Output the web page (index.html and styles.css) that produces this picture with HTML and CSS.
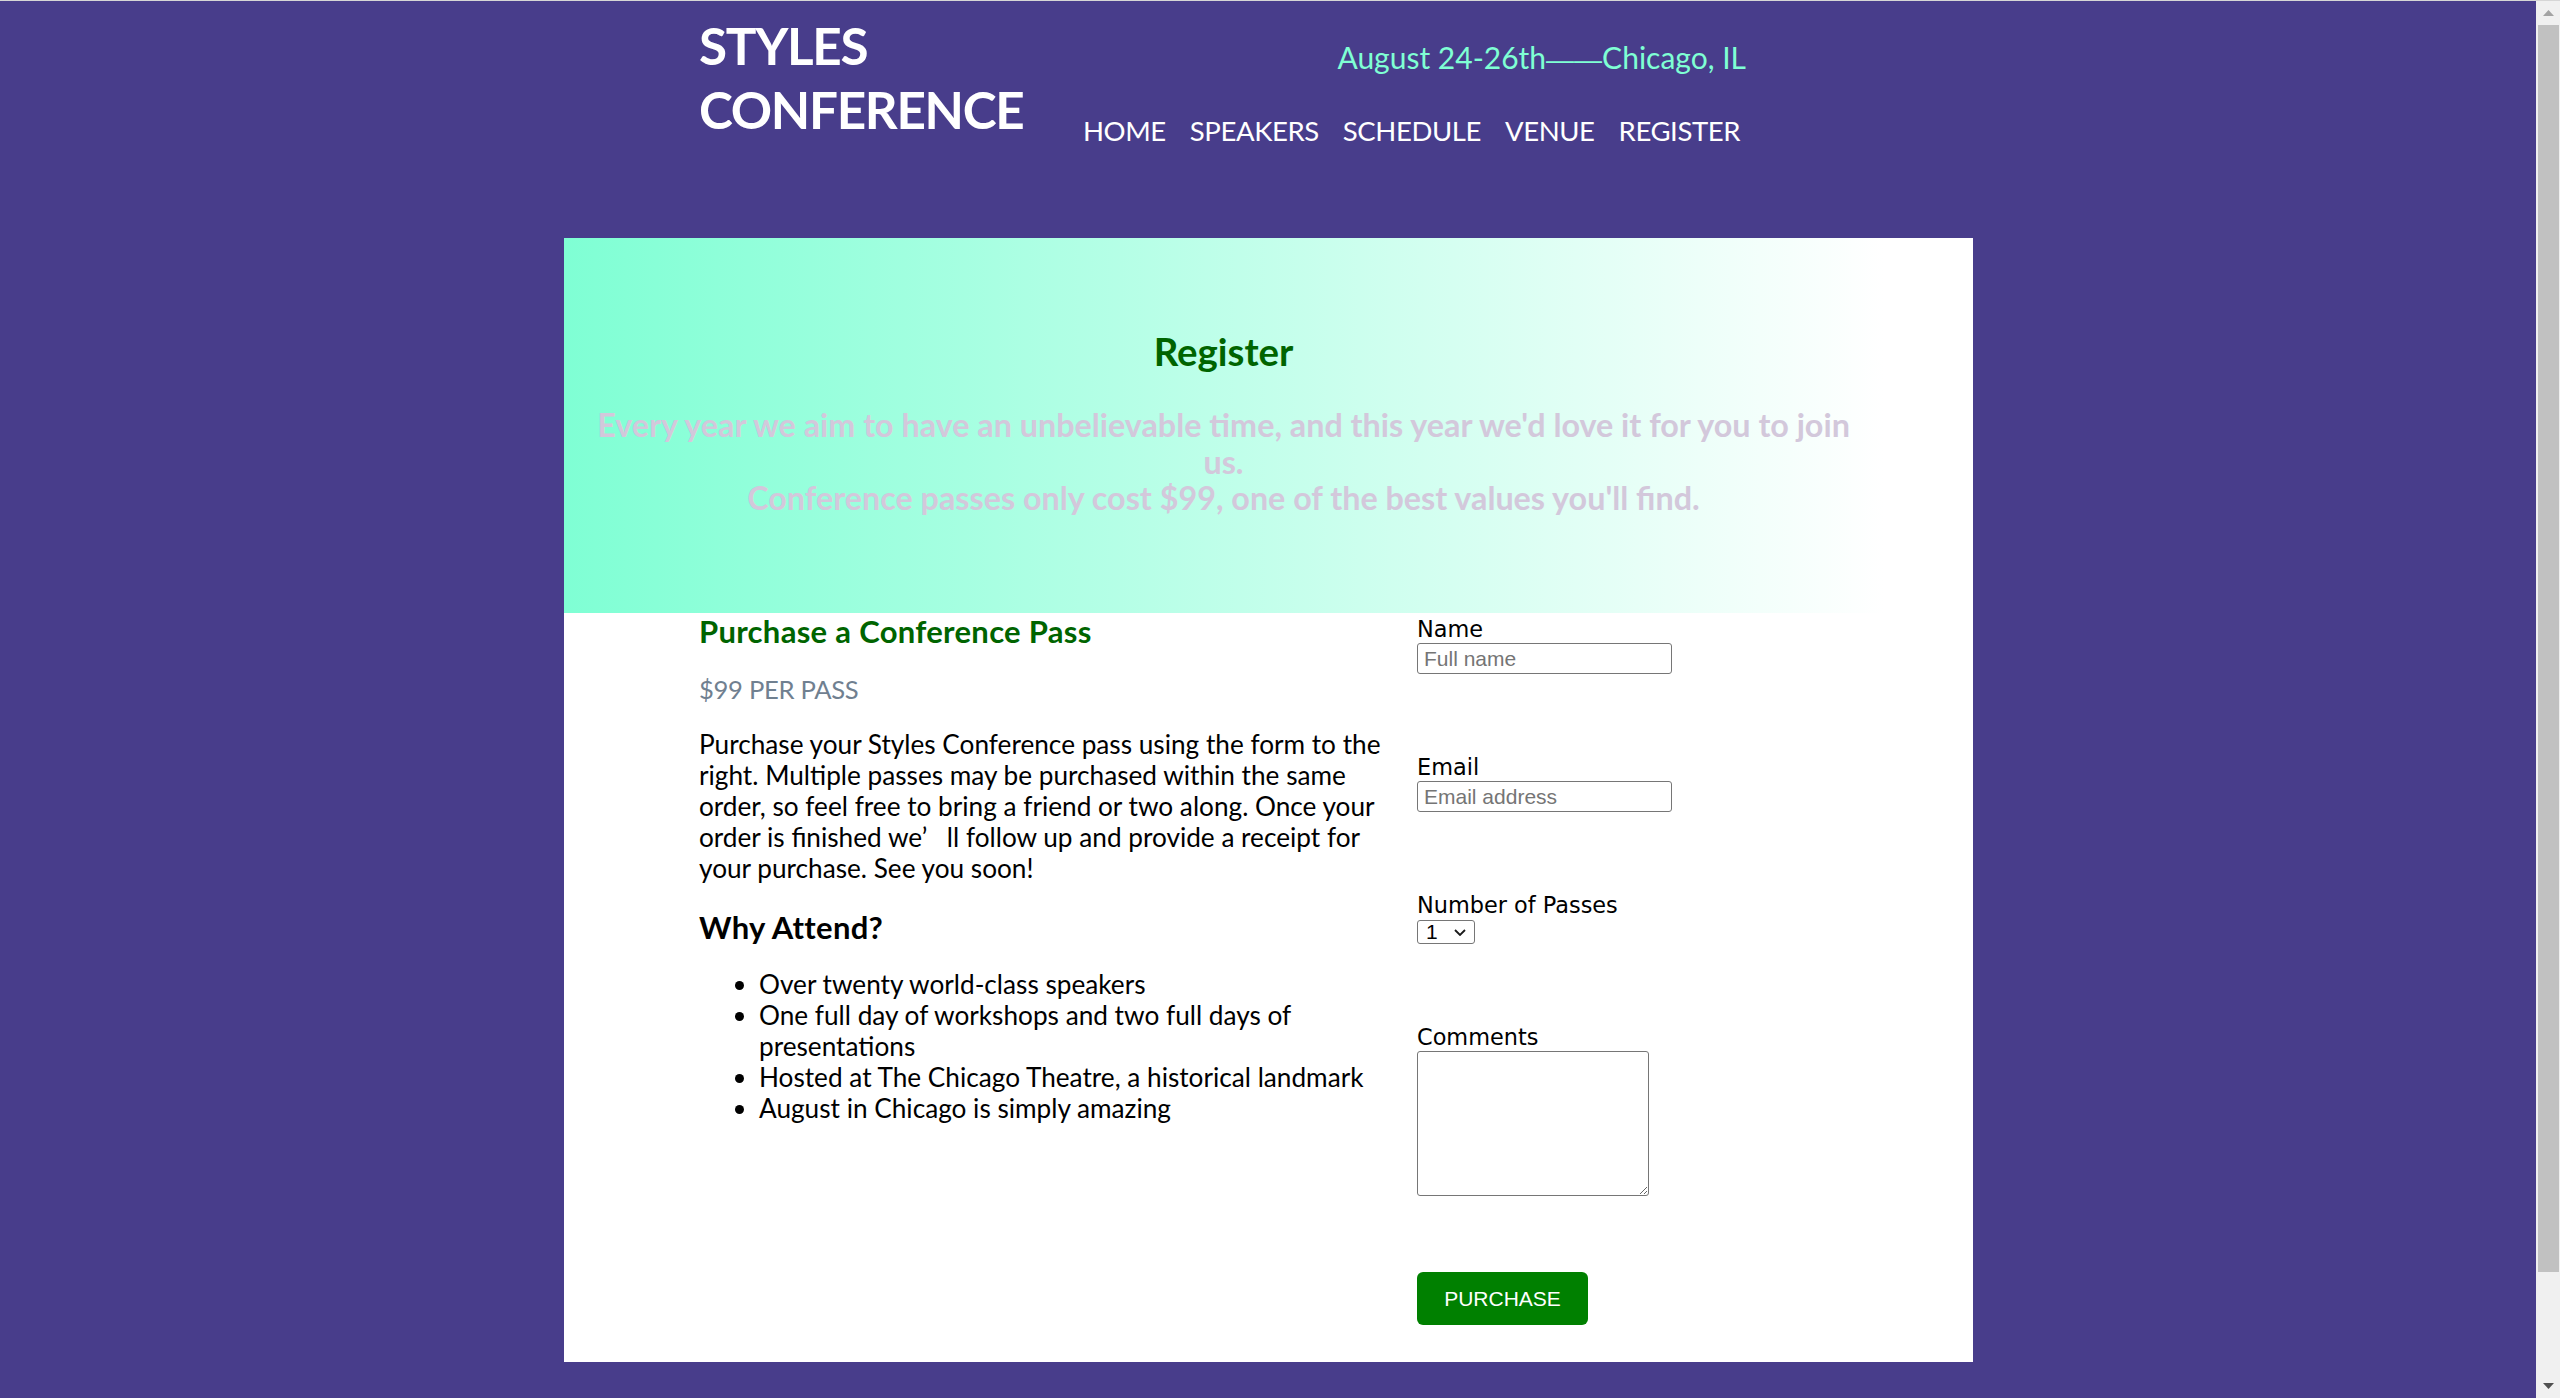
FILE: index.html
```html
<!DOCTYPE html>
<html lang="en">
<head>
<meta charset="utf-8">
<title>Register — Styles Conference</title>
<link rel="stylesheet" href="styles.css">
</head>
<body>
<div class="window">
  <div class="page">
    <header class="site-header">
      <div class="container header-inner">
        <h1 class="logo">STYLES<br>CONFERENCE</h1>
        <div class="header-right">
          <p class="tagline">August 24-26th<span class="dash">——</span>Chicago, IL</p>
          <nav class="nav">
            <a href="#">HOME</a>
            <a href="#">SPEAKERS</a>
            <a href="#">SCHEDULE</a>
            <a href="#">VENUE</a>
            <a href="#">REGISTER</a>
          </nav>
        </div>
      </div>
    </header>

    <main class="card">
      <section class="hero">
        <h2 class="hero-title">Register</h2>
        <p class="hero-text">Every year we aim to have an unbelievable time, and this year we'd love it for you to join us.<br>Conference passes only cost $99, one of the best values you'll find.</p>
      </section>

      <div class="container content">
        <div class="col-left">
          <h3 class="pass-title">Purchase a Conference Pass</h3>
          <p class="price">$99 PER PASS</p>
          <p class="intro">Purchase your Styles Conference pass using the form to the right. Multiple passes may be purchased within the same order, so feel free to bring a friend or two along. Once your order is finished we’&#8195;ll follow up and provide a receipt for your purchase. See you soon!</p>
          <h3 class="why">Why Attend?</h3>
          <ul class="reasons">
            <li>Over twenty world-class speakers</li>
            <li>One full day of workshops and two full days of presentations</li>
            <li>Hosted at The Chicago Theatre, a historical landmark</li>
            <li>August in Chicago is simply amazing</li>
          </ul>
        </div>

        <form class="col-right">
          <div class="field">
            <label for="name">Name</label>
            <input id="name" type="text" placeholder="Full name">
          </div>
          <div class="field">
            <label for="email">Email</label>
            <input id="email" type="email" placeholder="Email address">
          </div>
          <div class="field">
            <label for="qty">Number of Passes</label>
            <div class="select-wrap">
              <select id="qty">
                <option>1</option>
                <option>2</option>
                <option>3</option>
                <option>4</option>
                <option>5</option>
              </select>
              <svg class="chevron" width="12" height="7" viewBox="0 0 12 7"><path d="M1 1 L6 6 L11 1" fill="none" stroke="#1a1a1a" stroke-width="1.8"/></svg>
            </div>
          </div>
          <div class="field field-last">
            <label for="comments">Comments</label>
            <textarea id="comments"></textarea>
          </div>
          <button type="submit" class="purchase">PURCHASE</button>
        </form>
      </div>
    </main>
  </div>

  <div class="scrollbar" aria-hidden="true">
    <div class="sb-btn"><svg width="11" height="6" viewBox="0 0 11 6"><path d="M0 6 L5.5 0 L11 6 Z" fill="#a3a3a3"/></svg></div>
    <div class="sb-track"><div class="sb-thumb"></div></div>
    <div class="sb-btn"><svg width="11" height="6" viewBox="0 0 11 6"><path d="M0 0 L5.5 6 L11 0 Z" fill="#505050"/></svg></div>
  </div>
</div>
</body>
</html>
```

FILE: styles.css
```css
* { box-sizing: border-box; }

html, body {
  margin: 0;
  padding: 0;
}

body {
  background: #483d8b;
  font-family: Lato, "Open Sans", sans-serif;
  color: #000;
  overflow: hidden;
}

.window {
  display: flex;
  height: 1398px;
  border-top: 1px solid #d6d6d6;
}

.page {
  flex: 1;
  min-width: 0;
}

.container {
  width: 1138px;
  margin: 0 auto;
}

/* Header */
.site-header {
  height: 237px;
}

.header-inner {
  display: grid;
  grid-template-columns: 384px 663px;
  padding-top: 12px;
}

.logo {
  margin: 0;
  font-size: 51.2px;
  line-height: 64px;
  font-weight: 700;
  letter-spacing: -1.3px;
  color: #fff;
}

.header-right {
  padding-top: 26px;
}

.tagline {
  margin: 0;
  text-align: right;
  color: #7fffd4;
  font-size: 30px;
  line-height: 36px;
}

.dash {
  font-family: "Liberation Sans", Arial, sans-serif;
  font-size: 28px;
}

.nav {
  display: flex;
  gap: 24px;
  margin-top: 35px;
}

.nav a {
  color: #fff;
  text-decoration: none;
  font-size: 27.5px;
  letter-spacing: -0.4px;
  line-height: 36px;
}

/* Card */
.card {
  display: block;
  width: 1409px;
  margin: 0 auto;
  background: #fff;
  padding-bottom: 37px;
}

.hero {
  width: 1320px;
  height: 375px;
  padding-top: 90px;
  background: linear-gradient(to right, #7fffd4, #fff);
  text-align: center;
}

.hero-title {
  margin: 0;
  font-size: 38.4px;
  line-height: 46px;
  font-weight: 700;
  color: #006400;
}

.hero-text {
  margin: 33px 25px 0;
  font-size: 32.3px;
  line-height: 36.5px;
  font-weight: 700;
  color: #d3c8db;
}

.content {
  display: flex;
  gap: 18px;
}

.col-left {
  width: 700px;
  flex: none;
}

.pass-title {
  margin: 0;
  font-size: 31px;
  letter-spacing: 0.3px;
  line-height: 36px;
  font-weight: 700;
  color: #006400;
}

.price {
  margin: 25px 0 0;
  font-size: 25.6px;
  letter-spacing: -0.3px;
  line-height: 31px;
  color: #708090;
}

.intro {
  margin: 24px 0 0;
  font-size: 26.2px;
  line-height: 31px;
}

.why {
  margin: 25px 0 0;
  font-size: 31px;
  letter-spacing: 0.3px;
  line-height: 36px;
  font-weight: 700;
}

.reasons {
  margin: 24px 0 0;
  padding-left: 60px;
  font-size: 26.2px;
  line-height: 31px;
}

/* Form */
.col-right {
  flex: 1;
}

.field {
  margin-bottom: 77px;
}

.field-last {
  margin-bottom: 76px;
}

.field label {
  display: block;
  font-family: "DejaVu Sans", sans-serif;
  font-size: 22.4px;
  line-height: 30px;
  padding-top: 1px;
  height: 30px;
}

.field input {
  display: block;
  width: 255px;
  height: 31px;
  padding: 0 6px;
  border: 1px solid #767676;
  border-radius: 3px;
  font-family: "Liberation Sans", Arial, sans-serif;
  font-size: 21px;
  color: #000;
}

.field input::placeholder {
  color: #757575;
}

.select-wrap {
  position: relative;
  width: 58px;
  height: 24px;
  margin-top: 1px;
}

.select-wrap select {
  display: block;
  width: 58px;
  height: 24px;
  padding: 0 0 0 8px;
  appearance: none;
  -webkit-appearance: none;
  font-family: "Liberation Sans", Arial, sans-serif;
  font-size: 21px;
  line-height: 22px;
  border: 1px solid #767676;
  border-radius: 3px;
  background: #fff;
  color: #000;
}

.chevron {
  position: absolute;
  right: 9px;
  top: 9px;
  pointer-events: none;
}

.field textarea {
  display: block;
  width: 232px;
  height: 145px;
  border: 1px solid #767676;
  border-radius: 3px;
}

.purchase {
  display: block;
  width: 171px;
  height: 53px;
  border: none;
  border-radius: 6px;
  background: #008000;
  color: #fff;
  font-family: "Liberation Sans", Arial, sans-serif;
  font-size: 21px;
}

/* Scrollbar */
.scrollbar {
  width: 24px;
  flex: none;
  display: flex;
  flex-direction: column;
  background: #f0f0f0;
}

.sb-btn {
  height: 24px;
  display: flex;
  align-items: center;
  justify-content: center;
}

.sb-track {
  flex: 1;
  padding: 0 1px 0 2px;
}

.sb-thumb {
  height: 1247px;
  background: #c1c1c1;
}
```
